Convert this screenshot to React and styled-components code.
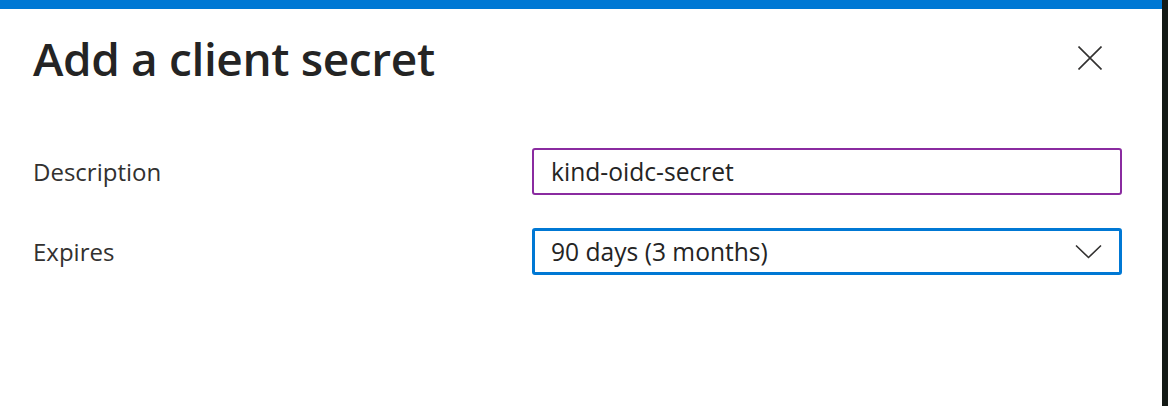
import React from "react";
import styled, { createGlobalStyle } from "styled-components";

const GlobalStyle = createGlobalStyle`
  html, body { margin: 0; padding: 0; }
  body {
    background: #141a16;
    font-family: "Open Sans", "Noto Sans", sans-serif;
  }
`;

const Page = styled.div`
  display: flex;
  height: 406px;
  width: 1168px;
  overflow: hidden;
`;

const Panel = styled.section`
  width: 1162px;
  height: 100%;
  background: #ffffff;
  border-top: 9px solid #0078d4;
  box-sizing: border-box;
  display: flex;
  flex-direction: column;
`;

const Header = styled.header`
  display: flex;
  align-items: flex-start;
  justify-content: space-between;
  height: 77px;
  padding: 21px 60px 0 33px;
  box-sizing: border-box;
`;

const Title = styled.h1`
  margin: 0;
  font-size: 46px;
  line-height: 56px;
  font-weight: 600;
  color: #242424;
  letter-spacing: -0.38px;
`;

const CloseButton = styled.button`
  border: 0;
  background: transparent;
  padding: 0;
  margin-top: 16px;
  width: 24px;
  height: 24px;
  display: flex;
  cursor: pointer;
`;

const Form = styled.div`
  display: grid;
  grid-template-columns: 499px 590px;
  row-gap: 33px;
  align-items: center;
  padding: 62px 0 0 33px;
`;

const Label = styled.label`
  font-size: 24px;
  color: #323130;
`;

const Field = styled.div`
  box-sizing: border-box;
  height: 47px;
  border: ${(p) => (p.$focused ? "3px solid #0078d4" : "2px solid #8a2ba0")};
  border-radius: 3px;
  display: flex;
  align-items: center;
  justify-content: space-between;
  padding: 0 ${(p) => (p.$focused ? "17px" : "18px")} 0 ${(p) => (p.$focused ? "16px" : "17px")};
  font-size: 24.6px;
  color: #242424;
`;

const Chevron = () => (
  <svg width="27" height="15" viewBox="0 0 27 15" fill="none">
    <path d="M1 1.5 L13.5 13.5 L26 1.5" stroke="#323130" strokeWidth="1.6" />
  </svg>
);

const CloseIcon = () => (
  <svg width="24" height="24" viewBox="0 0 24 24" fill="none">
    <path d="M0.5 0.5 L23.5 23.5 M23.5 0.5 L0.5 23.5" stroke="#323130" strokeWidth="1.6" />
  </svg>
);

export default function App() {
  return (
    <>
      <GlobalStyle />
      <Page>
        <Panel>
          <Header>
            <Title>Add a client secret</Title>
            <CloseButton aria-label="Close">
              <CloseIcon />
            </CloseButton>
          </Header>
          <Form>
            <Label>Description</Label>
            <Field>kind-oidc-secret</Field>
            <Label>Expires</Label>
            <Field $focused>
              <span>90 days (3 months)</span>
              <Chevron />
            </Field>
          </Form>
        </Panel>
      </Page>
    </>
  );
}
